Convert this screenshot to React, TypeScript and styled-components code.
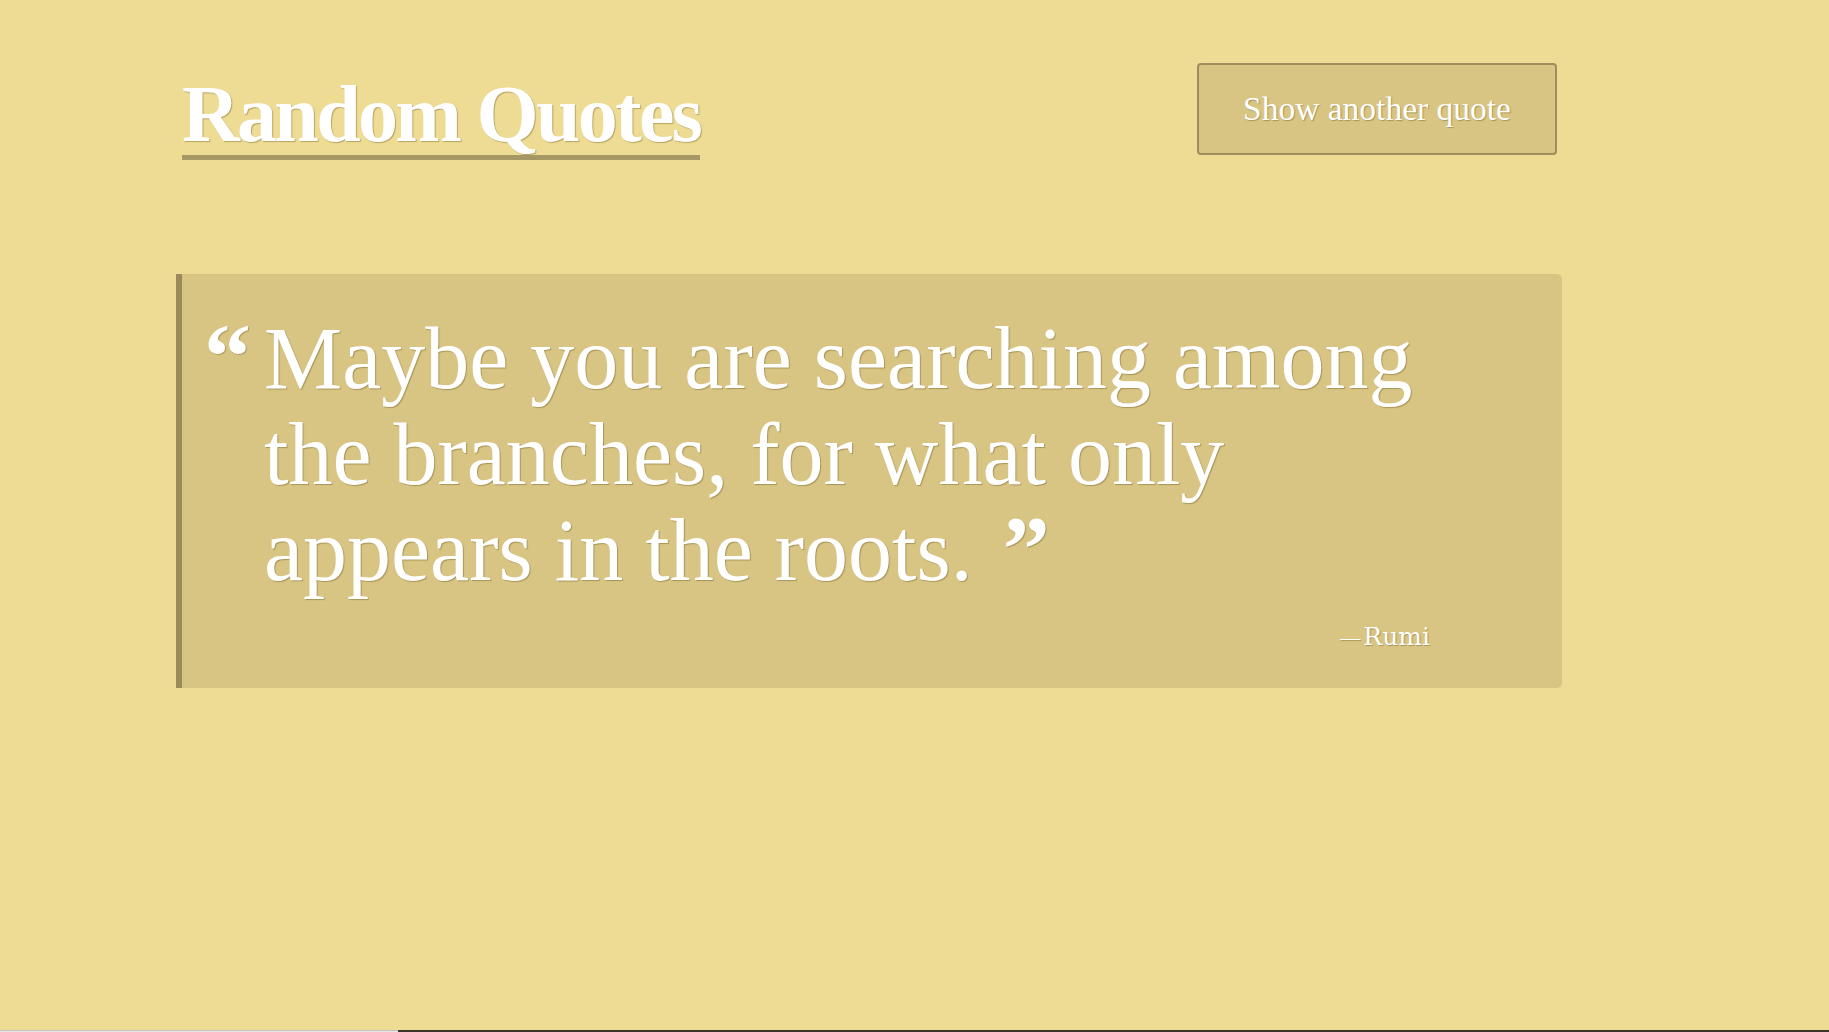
import React from "react";
import styled, { createGlobalStyle } from "styled-components";

const GlobalStyle = createGlobalStyle`
  html, body {
    margin: 0;
    padding: 0;
    background: #eedc94;
  }
  #root {
    min-height: 100vh;
  }
`;

const Page = styled.div`
  min-height: 100vh;
  display: flex;
  flex-direction: column;
  background: #eedc94;
  font-family: "Liberation Serif", "DejaVu Serif", serif;
  color: #ffffff;
`;

const Container = styled.main`
  width: 1386px;
  margin-left: 176px;
  display: flex;
  flex-direction: column;
`;

const Header = styled.header`
  display: flex;
  justify-content: space-between;
  align-items: flex-start;
  padding: 63px 5px 0 6px;
`;

const Title = styled.h1`
  margin: 16px 0 0 0;
  padding-bottom: 6px;
  display: inline-block;
  font-size: 80px;
  font-weight: 700;
  line-height: 70px;
  letter-spacing: -2.7px;
  color: #ffffff;
  text-shadow: 1px 1px 1px rgba(80, 60, 0, 0.35);
  border-bottom: 5px solid #a59865;
`;

const Button = styled.button`
  width: 360px;
  height: 92px;
  display: flex;
  align-items: center;
  justify-content: center;
  background: #d8c584;
  border: 2px solid #9d8e5c;
  border-radius: 4px;
  color: #ffffff;
  font-family: "Liberation Serif", "DejaVu Serif", serif;
  font-size: 33.5px;
  text-shadow: 1px 1px 1px rgba(80, 60, 0, 0.35);
  cursor: pointer;
  padding: 0;
`;

const QuoteBox = styled.blockquote`
  margin: 114px 0 0 0;
  height: 414px;
  box-sizing: border-box;
  background: #d8c584;
  border-left: 6px solid #9b8b5a;
  border-radius: 0 5px 5px 0;
  padding: 34px 0 0 22px;
  display: flex;
  flex-direction: column;
`;

const QuoteRow = styled.div`
  display: flex;
  align-items: baseline;
`;

const QuoteMark = styled.span`
  font-family: "Liberation Serif", serif;
  font-weight: 700;
  font-size: 94px;
  line-height: 96px;
  width: 60px;
  flex: none;
  text-shadow: 1px 1px 1px rgba(80, 60, 0, 0.3);
`;

const QuoteText = styled.p`
  margin: 0;
  width: 1166px;
  font-size: 88px;
  line-height: 96px;
  text-shadow: 1px 1px 1px rgba(80, 60, 0, 0.35);
`;

const CloseMark = styled.span`
  font-weight: 700;
  font-size: 94px;
  line-height: 0;
  margin-left: 8px;
`;

const Author = styled.cite`
  display: block;
  width: 1166px;
  margin: 23px 0 0 60px;
  text-align: right;
  font-style: normal;
  font-family: "DejaVu Serif", serif;
  font-size: 25px;
  line-height: 30px;
  text-shadow: 1px 1px 1px rgba(80, 60, 0, 0.35);
`;

const Dash = styled.span`
  font-family: "Liberation Serif", serif;
  font-size: 20px;
  margin-right: 3px;
`;

const BottomStrip = styled.div`
  margin-top: auto;
  height: 2px;
  display: flex;
`;

const StripPart = styled.div<{ $dark?: boolean; $w?: string }>`
  height: 2px;
  flex: ${(p) => (p.$w ? `0 0 ${p.$w}` : "1 1 auto")};
  background: ${(p) => (p.$dark ? "#3b3726" : "#e6e6e6")};
  border-top: ${(p) => (p.$dark ? "none" : "1px solid #c4c4c4")};
  box-sizing: border-box;
`;

export default function App() {
  return (
    <Page>
      <GlobalStyle />
      <Container>
        <Header>
          <Title>Random Quotes</Title>
          <Button>Show another quote</Button>
        </Header>
        <QuoteBox>
          <QuoteRow>
            <QuoteMark>“</QuoteMark>
            <QuoteText>
              Maybe you are searching among the branches, for what only appears in the roots.{" "}
              <CloseMark>”</CloseMark>
            </QuoteText>
          </QuoteRow>
          <Author>
            <Dash>—</Dash>Rumi
          </Author>
        </QuoteBox>
      </Container>
      <BottomStrip>
        <StripPart $w="398px" />
        <StripPart $dark />
      </BottomStrip>
    </Page>
  );
}
